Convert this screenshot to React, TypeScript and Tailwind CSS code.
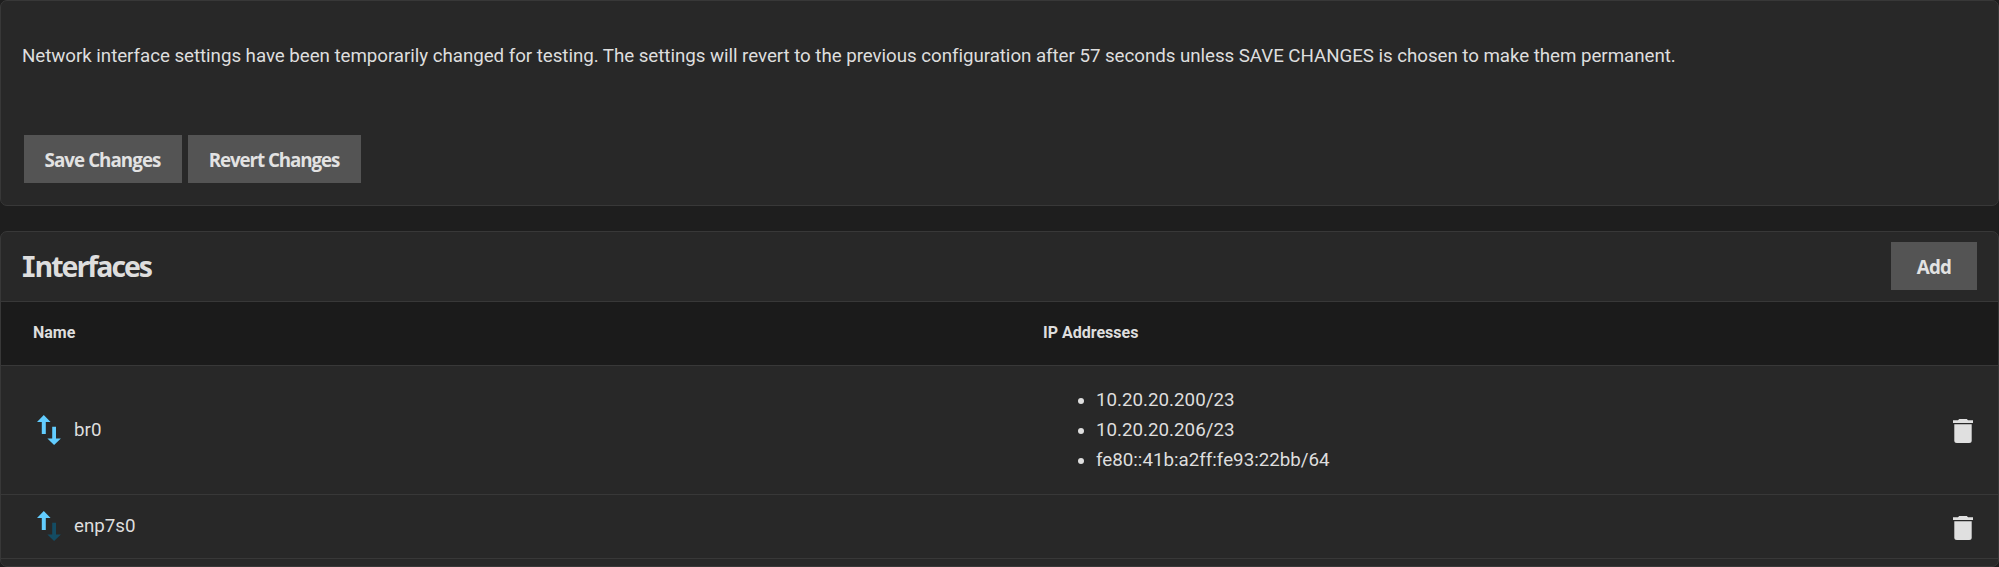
import type { ReactNode } from 'react';

interface NetworkInterface {
  name: string;
  receiving: boolean;
  addresses: string[];
}

const interfaces: NetworkInterface[] = [
  {
    name: 'br0',
    receiving: true,
    addresses: ['10.20.20.200/23', '10.20.20.206/23', 'fe80::41b:a2ff:fe93:22bb/64'],
  },
  { name: 'enp7s0', receiving: false, addresses: [] },
];

function Button({ className, children }: { className: string; children: ReactNode }) {
  return (
    <button
      className={`flex h-12 items-center justify-center bg-[#545454] pt-0.5 font-['Open_Sans',sans-serif] text-[18.75px] font-bold whitespace-nowrap text-[#e2e2e2] ${className}`}
    >
      {children}
    </button>
  );
}

function TrafficIcon({ receiving }: { receiving: boolean }) {
  return (
    <svg className="h-[30px] w-6 shrink-0" viewBox="0 0 24 30">
      <path d="M6.8 0 13.6 7H8.8V19H4.8V7H0Z" fill="#62cdff" />
      <path d="M17.1 30 23.9 23.4H19V11.8H15.2V23.4H10.4Z" fill={receiving ? '#62cdff' : '#144c63'} />
    </svg>
  );
}

function TrashIcon() {
  return (
    <svg className="h-6 w-5" viewBox="0 0 20 24" fill="#e0e0e0">
      <path d="M0 4V1.2H5L6.2 0H13.8L15 1.2H20V4Z" />
      <path d="M1.3 5.2H18.7V21.5Q18.7 24 16.2 24H3.8Q1.3 24 1.3 21.5Z" />
    </svg>
  );
}

export default function App() {
  return (
    <div className="flex h-[567px] w-full flex-col gap-[25px] bg-[#1e1e1e] font-[Roboto,sans-serif] text-[18.75px] leading-[30px] text-[#dedede]">
      <section className="flex h-[206px] flex-col justify-between rounded-[7px] border border-[#383838] bg-[#282828] px-[21px] pt-10 pb-[22px]">
        <p className="tracking-[-0.052px] whitespace-nowrap">
          Network interface settings have been temporarily changed for testing. The settings will revert to the
          previous configuration after 57 seconds unless SAVE CHANGES is chosen to make them permanent.
        </p>
        <div className="flex gap-1.5 pl-0.5">
          <Button className="w-[158px] pr-px tracking-[-0.95px]">Save Changes</Button>
          <Button className="w-[173px] pr-px tracking-[-1.08px]">Revert Changes</Button>
        </div>
      </section>

      <section className="flex h-[336px] flex-col overflow-hidden rounded-[7px] border border-[#383838] bg-[#282828]">
        <header className="flex h-[70px] items-center justify-between border-b border-[#383838] px-[21px] pb-0.5">
          <h3 className="pt-0.5 font-['Open_Sans',sans-serif] text-[28.5px] font-bold tracking-[-2.05px]">
            <span className="font-[Inter] tracking-[-1px] [font-feature-settings:'cv08']">I</span>nterfaces
          </h3>
          <Button className="w-[86px] tracking-[-0.8px]">Add</Button>
        </header>
        <div className="grid h-16 grid-cols-[1010px_1fr] items-center border-b border-[#383838] bg-[#1b1b1b] pb-0.5 pl-8 text-base font-bold">
          <span>Name</span>
          <span>IP Addresses</span>
        </div>
        {interfaces.map((item) => (
          <div
            key={item.name}
            className={`grid grid-cols-[1010px_1fr_45px] items-center border-b border-[#383838] pl-8 ${item.addresses.length ? 'h-[129px]' : 'h-16 pb-px'}`}
          >
            <div className="flex items-center gap-[13px] pl-1">
              <TrafficIcon receiving={item.receiving} />
              <span>{item.name}</span>
            </div>
            <ul className="list-disc pl-[53px]">
              {item.addresses.map((address) => (
                <li key={address}>{address}</li>
              ))}
            </ul>
            <button className={item.addresses.length ? 'pt-0.5' : 'pt-1'} aria-label="Delete">
              <TrashIcon />
            </button>
          </div>
        ))}
      </section>
    </div>
  );
}
